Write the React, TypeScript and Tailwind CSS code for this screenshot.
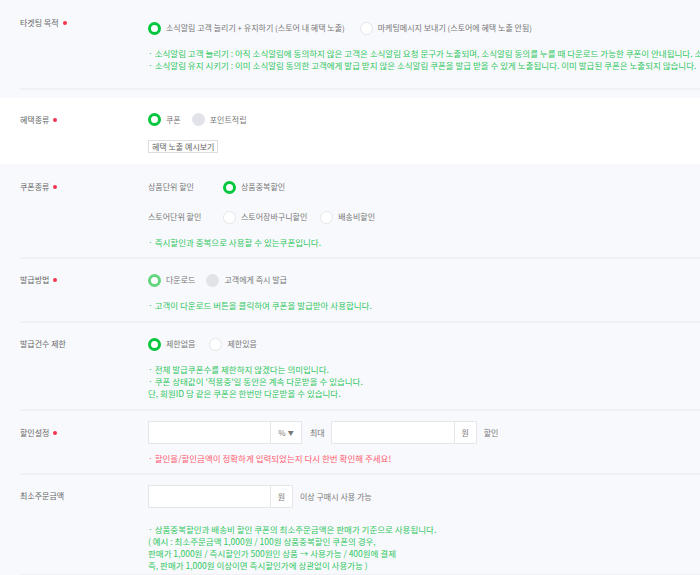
type RadioKind = 'on' | 'onLight' | 'off' | 'disabled';

function Radio({ kind }: { kind: RadioKind }) {
  const styles: Record<RadioKind, string> = {
    on: 'border-[3px] border-[#00c73c] bg-white',
    onLight: 'border-[3px] border-[#62d67f] bg-white',
    off: 'border border-[#e4e6ea] bg-white',
    disabled: 'bg-[#e1e3e8]',
  };
  return <span className={`inline-block w-[13px] h-[13px] rounded-full shrink-0 ${styles[kind]}`} />;
}

function Option({ kind, label, className = '' }: { kind: RadioKind; label: string; className?: string }) {
  return (
    <span className={`flex items-center gap-[5px] ${className}`}>
      <Radio kind={kind} />
      <span className="text-[#777]">{label}</span>
    </span>
  );
}

function Label({ text, required = false, pt }: { text: string; required?: boolean; pt: string }) {
  return (
    <div className={`w-[128px] shrink-0 flex items-start ${pt}`}>
      <span className="flex items-center h-[12px] text-[#666]">
        {text}
        {required && <span className="ml-[4px] w-[4px] h-[4px] rounded-full bg-[#f2364f]" />}
      </span>
    </div>
  );
}

function Note({ lines, color = 'text-[#2fc75e]', className = '' }: { lines: string[]; color?: string; className?: string }) {
  return (
    <div className={`${color} text-[8.5px] leading-[12px] ${className}`}>
      {lines.map(l => (
        <div key={l}>{l}</div>
      ))}
    </div>
  );
}

function Row({ children, className = '' }: { children: React.ReactNode; className?: string }) {
  return <div className={`flex ml-[20px] border-b-2 border-[#eef0f4] ${className}`}>{children}</div>;
}

function Box({ w, children }: { w: string; children?: React.ReactNode }) {
  return (
    <div className={`${w} h-[23px] bg-white border border-[#e4e6ea] flex items-center justify-center text-[#777]`}>
      {children}
    </div>
  );
}

export default function App() {
  return (
    <div className="w-[700px] h-[575px] overflow-hidden bg-[#f8f9fc] text-[8px] whitespace-nowrap font-['Noto_Sans_CJK_KR','Noto_Sans',sans-serif]">
      {/* 타겟팅 목적 */}
      <section className="pb-[8px]">
        <Row className="h-[90px]">
          <Label text="타겟팅 목적" required pt="pt-[17px]" />
          <div className="pt-[21px]">
            <div className="flex items-center h-[14px]">
              <Option kind="on" label="소식알림 고객 늘리기 + 유지하기 (스토어 내 혜택 노출)" />
              <Option kind="off" label="마케팅메시지 보내기 (스토어에 혜택 노출 안됨)" className="ml-[15px]" />
            </div>
            <Note
              className="mt-[12px]"
              lines={[
                '· 소식알림 고객 늘리기 : 아직 소식알림에 동의하지 않은 고객은 소식알림 요청 문구가 노출되며, 소식알림 동의를 누를 때 다운로드 가능한 쿠폰이 안내됩니다. 소식알림 동의 고객에게만 발급됩니다.',
                '· 소식알림 유지 시키기 : 이미 소식알림 동의한 고객에게 발급 받지 않은 소식알림 쿠폰을 발급 받을 수 있게 노출됩니다. 이미 발급된 쿠폰은 노출되지 않습니다.',
              ]}
            />
          </div>
        </Row>
      </section>

      {/* 혜택종류 */}
      <section className="bg-white h-[66px]">
        <div className="flex ml-[20px]">
          <Label text="혜택종류" required pt="pt-[16px]" />
          <div className="pt-[15px]">
            <div className="flex items-center h-[13px]">
              <Option kind="on" label="쿠폰" />
              <Option kind="disabled" label="포인트적립" className="ml-[11px]" />
            </div>
            <button className="mt-[14px] h-[13px] px-[3px] flex items-center border border-[#dcdee2] bg-white text-[#666] leading-none">
              혜택 노출 예시보기
            </button>
          </div>
        </div>
      </section>

      {/* 쿠폰종류 */}
      <Row className="h-[95px]">
        <Label text="쿠폰종류" required pt="pt-[17px]" />
        <div className="pt-[16px]">
          <div className="flex items-center h-[14px]">
            <span className="w-[75px] text-[#777]">상품단위 할인</span>
            <Option kind="on" label="상품중복할인" />
          </div>
          <div className="flex items-center h-[14px] mt-[16px]">
            <span className="w-[75px] text-[#777]">스토어단위 할인</span>
            <Option kind="off" label="스토어장바구니할인" />
            <Option kind="off" label="배송비할인" className="ml-[13px]" />
          </div>
          <Note className="mt-[12px]" lines={['· 즉시할인과 중복으로 사용할 수 있는쿠폰입니다.']} />
        </div>
      </Row>

      {/* 발급방법 */}
      <Row className="h-[64px]">
        <Label text="발급방법" required pt="pt-[15px]" />
        <div className="pt-[14px]">
          <div className="flex items-center h-[14px]">
            <Option kind="onLight" label="다운로드" />
            <Option kind="disabled" label="고객에게 즉시 발급" className="ml-[11px]" />
          </div>
          <Note className="mt-[12px]" lines={['· 고객이 다운로드 버튼을 클릭하여 쿠폰을 발급받아 사용합니다.']} />
        </div>
      </Row>

      {/* 발급건수 제한 */}
      <Row className="h-[88px]">
        <Label text="발급건수 제한" pt="pt-[15px]" />
        <div className="pt-[14px]">
          <div className="flex items-center h-[14px]">
            <Option kind="on" label="제한없음" />
            <Option kind="off" label="제한있음" className="ml-[14px]" />
          </div>
          <Note
            className="mt-[12px]"
            lines={[
              '· 전체 발급쿠폰수를 제한하지 않겠다는 의미입니다.',
              "· 쿠폰 상태값이 '적용중'일 동안은 계속 다운받을 수 있습니다.",
              '단, 회원ID 당 같은 쿠폰은 한번만 다운받을 수 있습니다.',
            ]}
          />
        </div>
      </Row>

      {/* 할인설정 */}
      <Row className="h-[64px]">
        <Label text="할인설정" required pt="pt-[16px]" />
        <div className="pt-[10px]">
          <div className="flex items-center">
            <Box w="w-[123px]" />
            <div className="-ml-px">
              <Box w="w-[32px]">
                <span className="flex items-center gap-[2px]">
                  %<span className="text-[6px]">▼</span>
                </span>
              </Box>
            </div>
            <span className="ml-[8px] text-[#777]">최대</span>
            <div className="ml-[6px]">
              <Box w="w-[124px]" />
            </div>
            <div className="-ml-px">
              <Box w="w-[23px]">원</Box>
            </div>
            <span className="ml-[7px] text-[#777]">할인</span>
          </div>
          <Note
            color="text-[#ff5b6e]"
            className="mt-[8px]"
            lines={['· 할인율/할인금액이 정확하게 입력되었는지 다시 한번 확인해 주세요!']}
          />
        </div>
      </Row>

      {/* 최소주문금액 */}
      <Row className="h-[101px]">
        <Label text="최소주문금액" pt="pt-[15px]" />
        <div className="pt-[10px]">
          <div className="flex items-center">
            <Box w="w-[123px]" />
            <div className="-ml-px">
              <Box w="w-[23px]">원</Box>
            </div>
            <span className="ml-[7px] text-[#777]">이상 구매시 사용 가능</span>
          </div>
          <Note
            className="mt-[15px]"
            lines={[
              '· 상품중복할인과 배송비 할인 쿠폰의 최소주문금액은 판매가 기준으로 사용됩니다.',
              '( 예시 : 최소주문금액 1,000원 / 100원 상품중복할인 쿠폰의 경우,',
              '판매가 1,000원 / 즉시할인가 500원인 상품 → 사용가능 / 400원에 결제',
              '즉, 판매가 1,000원 이상이면 즉시할인가에 상관없이 사용가능 )',
            ]}
          />
        </div>
      </Row>
    </div>
  );
}
